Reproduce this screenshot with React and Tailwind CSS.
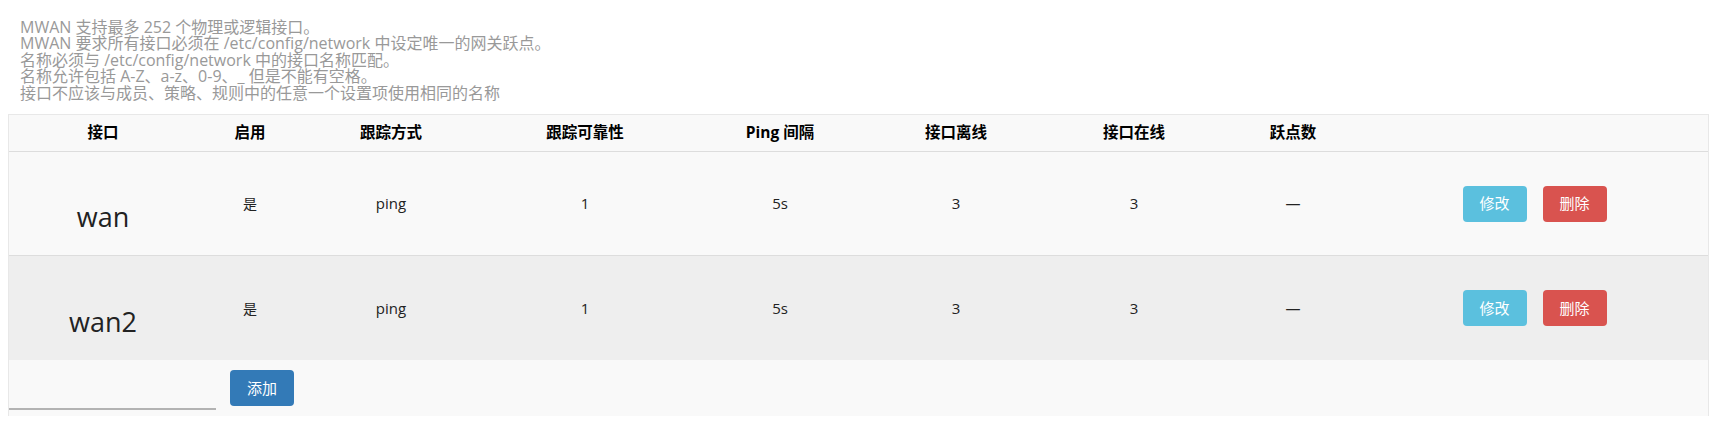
const FONT = "font-['Open_Sans','Noto_Sans_CJK_SC',sans-serif]";

const NOTES = [
  "MWAN 支持最多 252 个物理或逻辑接口。",
  "MWAN 要求所有接口必须在 /etc/config/network 中设定唯一的网关跃点。",
  "名称必须与 /etc/config/network 中的接口名称匹配。",
  "名称允许包括 A-Z、a-z、0-9、_ 但是不能有空格。",
  "接口不应该与成员、策略、规则中的任意一个设置项使用相同的名称",
];

const HEADERS = ["接口", "启用", "跟踪方式", "跟踪可靠性", "Ping 间隔", "接口离线", "接口在线", "跃点数", ""];

const ROWS = [
  { name: "wan", enabled: "是", track: "ping", reliability: "1", interval: "5s", down: "3", up: "3", metric: "—" },
  { name: "wan2", enabled: "是", track: "ping", reliability: "1", interval: "5s", down: "3", up: "3", metric: "—" },
];

const COLS = "grid grid-cols-[188px_106px_176px_212px_178px_174px_182px_136px_1fr]";

function Row({ r, bg }) {
  return (
    <div className={`${COLS} h-[104px] items-center text-center text-[15px] text-[#222] ${bg}`}>
      <div className="text-[27px] pt-[28px]">{r.name}</div>
      <div className="text-[14px]">{r.enabled}</div>
      <div>{r.track}</div>
      <div>{r.reliability}</div>
      <div>{r.interval}</div>
      <div>{r.down}</div>
      <div>{r.up}</div>
      <div>{r.metric}</div>
      <div className="flex justify-center gap-[16px]">
        <button className="w-[64px] h-[36px] rounded-[4px] bg-[#5bc0de] text-white text-[15px]">修改</button>
        <button className="w-[64px] h-[36px] rounded-[4px] bg-[#d9534f] text-white text-[15px]">删除</button>
      </div>
    </div>
  );
}

export default function App() {
  return (
    <div className={`w-[1720px] h-[422px] bg-white ${FONT}`}>
      <div className="pt-[19px] pl-[20px] text-[16px] leading-[16.4px] text-[#999]">
        {NOTES.map((n) => <div key={n}>{n}</div>)}
      </div>

      <div className="ml-[8px] mr-[11px] mt-[13px] border-x border-t border-[#e8e8e8]">
        {/* header */}
        <div className={`${COLS} h-[37px] items-center text-center text-[15.5px] font-bold text-black bg-[#f9f9f9] border-b border-[#ddd]`}>
          {HEADERS.map((h, i) => <div key={i}>{h}</div>)}
        </div>

        <Row r={ROWS[0]} bg="bg-[#f9f9f9] border-b border-[#ddd]" />
        <Row r={ROWS[1]} bg="bg-[#eeeeee]" />

        {/* add row */}
        <div className="h-[56px] bg-[#f9f9f9] flex items-center gap-[14px]">
          <input className="w-[207px] h-[36px] mt-[8px] bg-transparent border-b-2 border-[#b3b3b3] outline-none" />
          <button className="w-[64px] h-[36px] rounded-[4px] bg-[#337ab7] text-white text-[15px]">添加</button>
        </div>
      </div>
    </div>
  );
}
